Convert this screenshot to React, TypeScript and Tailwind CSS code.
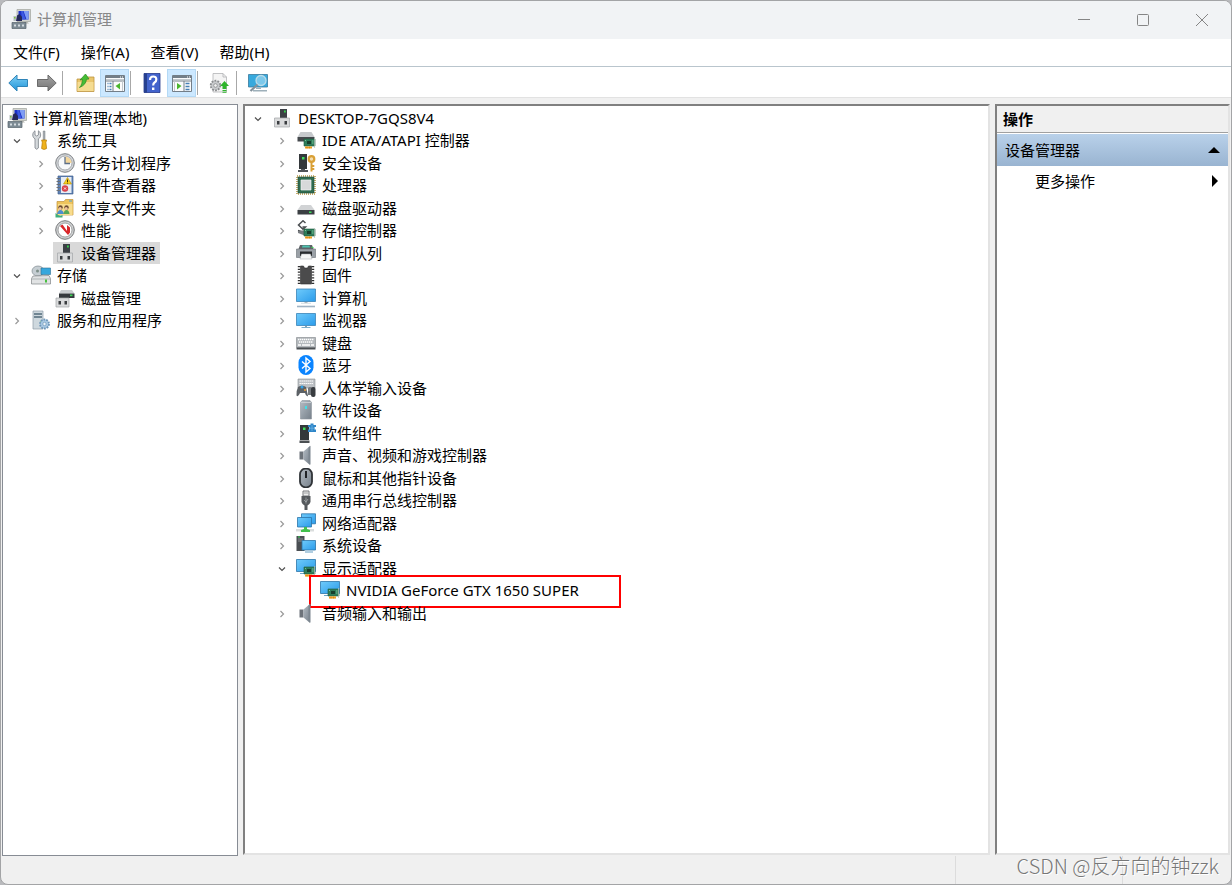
import type { ReactNode } from "react";

type IconName = keyof typeof glyphs;
type Item = { label: string; icon: IconName; level: 0 | 1 | 2; open?: boolean; leaf?: boolean; selected?: boolean; framed?: boolean };

const board = (
  <>
    <path d="M8 9h11v7H8z" fill="#2e7d5b" stroke="#1d5a3e" strokeWidth=".6" />
    <path d="M18.6 8v10" stroke="#b7c4bc" strokeWidth=".8" />
    <path d="M11 11h4v3h-4z" fill="#173f2c" />
    <path d="M9 10.5h1M16 11h1.500M16 13h1.500" stroke="#8fd0a8" strokeWidth=".8" />
    <path d="M9 16.400h7v2.200H9z" fill="#f0a020" />
    <path d="M11 16.500v2M13.500 16.500v2" stroke="#b87010" strokeWidth=".5" />
  </>
);

const speaker = (
  <>
    <path d="M3.500 6.500h4v8h-4z" fill="#6d737a" />
    <path d="M7.500 6.500 14 1v19l-6.500-5.500z" fill="url(#steel)" />
    <path d="M12.500 2.500 14.500.8v19l-2-1.800z" fill="#7c868f" />
  </>
);

const towerBase = (
  <>
    <path d="M8 1h7v10H8z" fill="#3c4045" />
    <path d="M12 2.500h1.800v2H12z" fill="#35d04c" />
    <path d="M2.500 10h15v9h-15z" fill="#d9dadb" stroke="#a2a5a8" strokeWidth=".7" />
    <path d="M5 13h2.500v3.500H5zM12.500 13H15v3.500h-2.500z" fill="#3a3d40" />
  </>
);

const glyphs = {
  management: (
    <>
      <path d="M6 .5h13.500v12H6z" fill="#d3d5d0" stroke="#a0a39e" strokeWidth=".7" />
      <path d="M7.500 2h10v8.500h-10z" fill="#1a2fc8" />
      <path d="M12.500 2h5v8.500h-2z" fill="#7f9df4" />
      <path d="M10 2h2l2.500 8.500H11z" fill="#3d5ae0" />
      <path d="M6 6.500 8.500 5l2.500 3v4H5z" fill="#25285a" />
      <path d="M2.500 7H5v5H2.500z" fill="#b8bec2" />
      <path d="M3 8h1.500v1.500H3z" fill="#7cc23c" />
      <path d="M13 12.500h3l2 2h-5z" fill="#b5b7b2" />
      <path d="M1 13.500h14v6H1z" fill="#7d8b94" stroke="#56626a" strokeWidth=".7" />
      <path d="M3 15.500h2v2H3zM7 15.500h2v2H7zM11 15.500h2v2h-2z" fill="#d5dce0" />
    </>
  ),
  tools: (
    <>
      <path d="M4 .8C1 2.500 1 7.500 4 8.800V18q1.700 2.500 3.400 0V8.800c3-1.300 3-6.300 0-8V5L5.700 6 4 5z" fill="#d5d9dc" stroke="#7b8288" strokeWidth=".8" />
      <path d="M12.200 1h1.800v9h-1.800z" fill="#a7adb2" stroke="#777d82" strokeWidth=".5" />
      <path d="M10.600 10h5l-.7 2.500.7 6q-2.500 2-5 0l.7-6z" fill="#f0b31c" stroke="#b57b08" strokeWidth=".7" />
    </>
  ),
  clock: (
    <>
      <circle cx="10" cy="10" r="9.300" fill="#d2d5d8" stroke="#7d8084" />
      <circle cx="10" cy="10" r="7" fill="#f7f9fb" stroke="#989ca1" strokeWidth=".8" />
      <path d="M10 10V3.500A6.500 6.500 0 0 1 16.500 10z" fill="#f3d69b" />
      <path d="M10 4v6.500h5" fill="none" stroke="#5c6f88" strokeWidth="1.300" />
    </>
  ),
  events: (
    <>
      <path d="M3 1h15v18H3z" fill="#5f82b5" stroke="#42618f" strokeWidth=".7" />
      <path d="M6 2h10.500v16H6z" fill="#e6ecf4" />
      <path d="M1.500 3.500H5M1.500 6.500H5M1.500 9.500H5M1.500 12.500H5M1.500 15.500H5" stroke="#6d7075" strokeWidth="1.200" />
      <path d="m12.500 2.500 4 6.500h-8z" fill="#f7cf1d" stroke="#b98c05" strokeWidth=".6" />
      <path d="M12.500 4.500V7m0 .7v.8" stroke="#403000" />
      <circle cx="10" cy="13.500" r="3.200" fill="#d8404a" />
      <path d="m9 12.500 2 2m0-2-2 2" stroke="#fff" strokeWidth=".9" />
    </>
  ),
  shared: (
    <>
      <path d="M2 3.500h7l1.500-2H18V17H2z" fill="#eec45c" stroke="#c2923a" strokeWidth=".7" />
      <path d="M3 6h14.500v11H3z" fill="#f8dc8c" />
      <path d="M14 3h3" stroke="#4c9ed8" strokeWidth="1.200" />
      <circle cx="5.500" cy="9.500" r="2.200" fill="#6b4a32" />
      <circle cx="11.500" cy="9.500" r="2.200" fill="#6b4a32" />
      <circle cx="5.200" cy="10.400" r="1.500" fill="#f0c49c" />
      <circle cx="11.200" cy="10.400" r="1.500" fill="#f0c49c" />
      <path d="M2 16q1-4 3.500-4T9 16z" fill="#4d8ed0" />
      <path d="M8.500 16q.5-4 3-4t3 4z" fill="#58a85a" />
      <path d="M.5 15q4 4 7 2v2.500h-7z" fill="#3fae7c" />
    </>
  ),
  performance: (
    <>
      <circle cx="10" cy="10" r="9.300" fill="#cfd1d2" stroke="#77797b" />
      <circle cx="10" cy="10" r="7" fill="#fff" stroke="#8d8f91" strokeWidth=".8" />
      <path d="m5 6 2.500-1.500L12 11V5l3 2.500v5L13 15z" fill="#d9262a" />
    </>
  ),
  device: towerBase,
  storage: (
    <>
      <ellipse cx="7" cy="6" rx="6" ry="5" fill="#c6ced3" stroke="#838c92" strokeWidth=".7" />
      <circle cx="6.500" cy="6" r="1.500" fill="#7d8e88" />
      <path d="M10 3h9.500v6.500H10z" fill="#37a7dd" stroke="#2f6e90" strokeWidth=".6" />
      <path d="m2 11 16-.5 1.500 3v5.500h-19v-5.500z" fill="#e1e3e4" stroke="#7f8487" strokeWidth=".7" />
      <path d="M1 14h18" stroke="#9ba0a3" strokeWidth=".7" />
      <path d="M14 14.500h2v3h-2z" fill="#47bf3f" />
    </>
  ),
  diskManagement: (
    <>
      <path d="M6 2h11l2.500 3.500H4z" fill="#c9cccf" />
      <path d="M4 5.500h15.500V10H4z" fill="#35393d" />
      <path d="M15 6.500h2.500v1.700H15z" fill="#3ad654" />
      <path d="M1 10h13v9H1z" fill="#d9dadb" stroke="#a2a5a8" strokeWidth=".7" />
      <path d="M3.500 13H6v3.500H3.500zM9.500 13H12v3.500H9.500z" fill="#3a3d40" />
    </>
  ),
  services: (
    <>
      <path d="M2 1h10v18H2z" fill="#ced8de" stroke="#8e9ca6" strokeWidth=".7" />
      <path d="M3 4h8M3 7h8" stroke="#51697a" strokeWidth="1.300" />
      <path d="M9 12h2" stroke="#52b85c" />
      <circle cx="13.500" cy="14" r="4.500" fill="#a9c9e4" stroke="#6f96b8" strokeWidth="1.800" strokeDasharray="1.800 1" />
      <circle cx="13.500" cy="14" r="1.700" fill="#eef4f8" stroke="#6f96b8" strokeWidth=".7" />
    </>
  ),
  ide: (
    <>
      <path d="M4.500 2h11l3 5H1.500z" fill="#c6c9cc" />
      <path d="M1.500 7h17v4.500h-17z" fill="#45494d" />
      {board}
    </>
  ),
  security: (
    <>
      <path d="M3 1h8v15H3z" fill="#34383b" />
      <path d="M2 17h10v2H2zM5 16h4v1H5z" fill="#505458" />
      <path d="M6 4h2.500v2.500H6z" fill="#3de05a" />
      <circle cx="15.500" cy="6" r="2.800" fill="#f3dcae" stroke="#d9a036" strokeWidth="2.200" />
      <path d="M15.500 9v9.500M16.500 13h1.800M16.500 16h1.800" stroke="#d9a036" strokeWidth="2" />
    </>
  ),
  processor: (
    <>
      <path d="M1 1h18v18H1z" fill="none" stroke="#b49745" strokeWidth="1.600" strokeDasharray="1 1" />
      <path d="M2 2h16v16H2z" fill="#2f6b50" stroke="#1f4e39" strokeWidth=".6" />
      <path d="M5 5h10v10H5z" fill="#d8d9da" stroke="#f3f4f4" strokeWidth=".7" />
    </>
  ),
  disk: (
    <>
      <path d="M5 7h10l3.500 5h-17z" fill="#d1d3d5" />
      <path d="M1.500 12h17v4.500h-17z" fill="#3b3f43" />
      <path d="M13 13.500h2.500v1.500H13z" fill="#3ddd5b" />
    </>
  ),
  storageController: (
    <>
      <path d="M9.500 3 7 .8 2.500 5 7 9.300 9.500 7H6.500M2 10.500l6 2" fill="none" stroke="#4b4e51" strokeWidth="1.500" />
      <path d="m2 11 8-1v6l-8-3z" fill="#777b7f" />
      {board}
    </>
  ),
  printer: (
    <>
      <path d="M4 2h12l1.500 4h-15z" fill="#5d6266" />
      <path d="M6.500 2.500h7l.5 2H6z" fill="#4cc3b0" />
      <path d="M.5 6h19v8.500H.5z" fill="#9aa0a6" stroke="#6a7076" strokeWidth=".6" />
      <path d="M4 8.500h12V13H4z" fill="#26292c" />
      <path d="M5.500 11h9l1.500 5H4z" fill="#f4f5f5" stroke="#a5a9ac" strokeWidth=".5" />
      <path d="M15.500 4.500h2" stroke="#38d650" strokeWidth="1.200" />
    </>
  ),
  firmware: (
    <>
      <path d="M4.500 1h3l1 2h3l1-2h3v18h-11z" fill="#4b4b4c" stroke="#2d2d2e" strokeWidth=".6" />
      <path d="M3 1v18M17 1v18" stroke="#303031" strokeWidth="2.400" strokeDasharray="1.200 1.600" />
    </>
  ),
  computer: (
    <>
      <path d="M.5 1h19v12.500H.5z" fill="url(#screen)" stroke="#3a84b8" strokeWidth=".8" />
      <path d="M8.500 14h3v1h-3z" fill="#a9b4bc" />
      <path d="M5 15.300h10" stroke="#ccd5db" strokeWidth=".8" />
      <path d="M1 18.500h18" stroke="#9fb3c4" strokeWidth="1.600" />
    </>
  ),
  monitor: (
    <>
      <path d="M.5 3.500h19v12H.5z" fill="url(#screen)" stroke="#3a84b8" strokeWidth=".8" />
      <path d="M9 16h2v1H9z" fill="#8aa0ae" />
      <path d="M5.500 17.500h9" stroke="#7daecb" />
    </>
  ),
  keyboard: (
    <>
      <path d="M.5 4.500h19v10H.5z" fill="#b4b9bd" stroke="#8c9195" strokeWidth=".7" />
      <path d="M.5 14.500h19v2H.5z" fill="#4a4f53" />
      <path d="M2 6.500h16M3 9h14" stroke="#fff" strokeWidth="1.400" strokeDasharray="1.400 .6" />
      <path d="M2 12h3m1 0h8m1 0h3" stroke="#fff" strokeWidth="1.400" />
    </>
  ),
  bluetooth: (
    <>
      <rect x="2.500" y="0" width="15" height="20" rx="7.500" fill="#0a84ff" />
      <path d="m6 6.500 8 7-4 3.500V3l4 3.500-8 7" fill="none" stroke="#fff" strokeWidth="1.400" />
    </>
  ),
  hid: (
    <>
      <path d="M2 1h17v9H2z" fill="#bdc1c5" stroke="#8c9195" strokeWidth=".6" />
      <path d="M3.500 3h14M3.500 5.500h14" stroke="#fff" strokeWidth="1.200" strokeDasharray="1.400 .6" />
      <path d="M2 9q4-2.500 8 0l2 9q-2 1-3-3H4q-2 5-3.500 2.500Q0 13 2 9z" fill="#5c6166" />
      <circle cx="6" cy="9" r="1.500" fill="#35a3e4" />
      <path d="M12 10q2-2 4 0v7h-4z" fill="#74797d" />
      <rect x="15" y="9" width="4.500" height="10" rx="2" fill="#383c40" />
      <circle cx="9" cy="12" r="1" fill="#e99b35" />
    </>
  ),
  softwareDevice: (
    <>
      <path d="M4.500 2.500 6 .5h8l1.500 2V19h-11z" fill="url(#steel)" stroke="#8e969d" strokeWidth=".6" />
      <path d="M5 2.500h10" stroke="#c6ccd1" />
      <path d="M9 6h2v3H9z" fill="#3fe0e8" />
    </>
  ),
  component: (
    <>
      <path d="M4 2h9v15H4z" fill="#33373a" />
      <path d="M3.500 17.500h10V20h-10z" fill="#4b4f52" />
      <path d="M7 4.500h2.500V7H7z" fill="#3de05a" />
      <path d="M12 2h2.500V.5h3V2H20v2h-1.500v2.500H20v2.500h-8V6.500h1.500V4H12z" fill="#2f86c8" />
      <path d="M16 2v6M13 5.200h6" stroke="#69b1e2" strokeWidth=".8" />
    </>
  ),
  speaker,
  mouse: (
    <>
      <rect x="4" y=".700" width="12" height="18.600" rx="5.500" fill="url(#steel)" stroke="#2f3337" strokeWidth="1.800" />
      <path d="M10 3v7" stroke="#202327" strokeWidth="2" />
    </>
  ),
  usb: (
    <>
      <path d="M7 1h6v5H7z" fill="#eceded" stroke="#77797c" />
      <path d="M8.500 3h1m1 0h1" stroke="#55585b" />
      <path d="M5.500 6h9v6q-1 3-3 3.500V20h-3v-4.500q-2-.5-3-3.500z" fill="#55595d" />
      <path d="M10 7.500v6M8 10l2 2 2-3" stroke="#aeb2b5" strokeWidth=".7" fill="none" />
    </>
  ),
  network: (
    <>
      <path d="M5.500.8h14v10h-14z" fill="url(#screen)" stroke="#2c75a8" strokeWidth=".8" />
      <path d="M1.500 4.500h14v9.500h-14z" fill="url(#screen)" stroke="#2c75a8" strokeWidth=".8" />
      <path d="M0 16h18v2.500H0z" fill="#dadddd" />
      <path d="M8 14h3v2l3 1v2H5v-2l3-1z" fill="#42c14d" />
    </>
  ),
  system: (
    <>
      <path d="M.5 1h8v15h-8z" fill="#4a4f53" />
      <path d="M2 4h5M2 6h5" stroke="#8e9498" strokeWidth=".9" />
      <path d="M2 2h2" stroke="#3ddd5b" />
      <path d="M6 5.500h13.500V15H6z" fill="url(#screen)" stroke="#2c75a8" strokeWidth=".8" />
      <path d="M9 17h8" stroke="#7daecb" strokeWidth="1.200" />
    </>
  ),
  display: (
    <>
      <path d="M.5 1.500h19v12H.5z" fill="url(#screen)" stroke="#2c75a8" strokeWidth=".8" />
      <path d="M4 15.500h5" stroke="#6fa6c8" />
      {board}
    </>
  ),
  back: <path d="M.8 10 9 2v4.500h10.500v7H9V18z" fill="url(#blueArrow)" stroke="#2f84b8" />,
  forward: <path d="M19.200 10 11 2v4.500H.5v7H11V18z" fill="url(#greyArrow)" stroke="#6b6b6b" />,
  folderUp: (
    <>
      <path d="M1 6h7l1.500-2H18v14.500H1z" fill="#eac66c" stroke="#be9440" strokeWidth=".8" />
      <path d="M1.500 9h16v9h-16z" fill="#f5dc92" />
      <path d="M3.500 14.500C6 12 6 9 6.500 6.500L4 7l5.500-6L13 6l-2.500.3Q10 12 3.500 14.500z" fill="#45bd35" stroke="#2c8a24" strokeWidth=".7" />
    </>
  ),
  treePane: (
    <>
      <path d="M.5 2.500h19v16H.5z" fill="#fafbfc" stroke="#737e88" />
      <path d="M1 3h18v2H1z" fill="#737e88" />
      <path d="M1 6.500h18" stroke="#c2c8cd" />
      <path d="M15 4h1m1 0h1" stroke="#fff" />
      <path d="M.5 8h19M8 8v10.500" stroke="#737e88" />
      <path d="M2.500 10.500h1m1 0h2m-4 3h1m1 0h2m-4 3h1m1 0h2" stroke="#467fb5" strokeWidth="1.300" />
      <path d="M15 10v6.500L10.500 13z" fill="#4ab62e" />
      <path d="M17.500 8v10" stroke="#c2c8cd" />
    </>
  ),
  actionPane: (
    <>
      <path d="M.5 2.500h19v16H.5z" fill="#fafbfc" stroke="#737e88" />
      <path d="M1 3h18v2H1z" fill="#737e88" />
      <path d="M1 6.500h18" stroke="#c2c8cd" />
      <path d="M15 4h1m1 0h1" stroke="#fff" />
      <path d="M.5 8h19M12 8v10.500" stroke="#737e88" />
      <path d="M13.500 10.500h4m-4 3h4m-4 3h4" stroke="#467fb5" strokeWidth="1.300" />
      <path d="M5 10v6.500L9.500 13z" fill="#4ab62e" />
      <path d="M2.500 8v10" stroke="#c2c8cd" />
    </>
  ),
  help: (
    <>
      <path d="M2 .500h16v19H2z" fill="#4263cc" stroke="#24398a" strokeWidth=".8" />
      <path d="M2 .500h3v19H2z" fill="#27408f" />
      <path d="M8 7q0-3.500 3.200-3.500T14.300 6.500q0 2-1.800 3-1.300.8-1.300 3" fill="none" stroke="#fff" strokeWidth="2.200" />
      <path d="M10 14.500h2.400v2.400H10z" fill="#fff" />
    </>
  ),
  update: (
    <>
      <path d="M4 .5h10l3.500 3.500v15H4z" fill="#f4f4f4" stroke="#b2b4b6" strokeWidth=".8" />
      <path d="M14 .5V4h3.500" fill="none" stroke="#b2b4b6" strokeWidth=".8" />
      <circle cx="6.500" cy="12.500" r="4.800" fill="#c9cbcd" stroke="#8b8d8f" strokeWidth="1.800" strokeDasharray="1.800 1.200" />
      <circle cx="6.500" cy="12.500" r="1.800" fill="#f3f3f3" stroke="#808284" strokeWidth=".7" />
      <path d="m15.500 8 4.500 5h-2.500v3h-4v-3H11zM13.500 17h4v1h-4zM13.500 18.800h4v1h-4z" fill="#2fb52c" />
    </>
  ),
  scan: (
    <>
      <path d="M.5 1.500h19v12.500H.5z" fill="#37a9dd" stroke="#3a7a9c" strokeWidth=".8" />
      <path d="M8 14.500h5V16H8zM5 17h14v1.500H5z" fill="#9eb0ba" />
      <circle cx="13" cy="7.500" r="5" fill="#8fd0ee" fillOpacity=".8" stroke="#b9dcea" strokeWidth="1.300" />
      <path d="m9.500 11.500-7 6.500" stroke="#82919b" strokeWidth="2.200" />
    </>
  ),
};

function Icon({ name }: { name: IconName }) {
  return (
    <svg viewBox="0 0 20 20" className="size-5 shrink-0" aria-hidden="true">
      {glyphs[name]}
    </svg>
  );
}

function Gradients() {
  return (
    <svg className="absolute size-0" aria-hidden="true">
      <defs>
        <linearGradient id="screen" x1="0" y1="0" x2="1" y2="1">
          <stop offset="0" stopColor="#6fcbfb" />
          <stop offset="1" stopColor="#2b9bea" />
        </linearGradient>
        <linearGradient id="steel" x1="0" y1="0" x2="1" y2="1">
          <stop offset="0" stopColor="#b4bcc4" />
          <stop offset="1" stopColor="#76808a" />
        </linearGradient>
        <linearGradient id="blueArrow" x1="0" y1="0" x2="0" y2="1">
          <stop offset="0" stopColor="#7fd0f5" />
          <stop offset="1" stopColor="#1e93d8" />
        </linearGradient>
        <linearGradient id="greyArrow" x1="0" y1="0" x2="0" y2="1">
          <stop offset="0" stopColor="#a3a3a3" />
          <stop offset="1" stopColor="#757575" />
        </linearGradient>
      </defs>
    </svg>
  );
}

const consoleItems: Item[] = [
  { label: "计算机管理(本地)", icon: "management", level: 0, leaf: true },
  { label: "系统工具", icon: "tools", level: 1, open: true },
  { label: "任务计划程序", icon: "clock", level: 2 },
  { label: "事件查看器", icon: "events", level: 2 },
  { label: "共享文件夹", icon: "shared", level: 2 },
  { label: "性能", icon: "performance", level: 2 },
  { label: "设备管理器", icon: "device", level: 2, leaf: true, selected: true },
  { label: "存储", icon: "storage", level: 1, open: true },
  { label: "磁盘管理", icon: "diskManagement", level: 2, leaf: true },
  { label: "服务和应用程序", icon: "services", level: 1 },
];

const deviceItems: Item[] = [
  { label: "DESKTOP-7GQS8V4", icon: "device", level: 0, open: true },
  { label: "IDE ATA/ATAPI 控制器", icon: "ide", level: 1 },
  { label: "安全设备", icon: "security", level: 1 },
  { label: "处理器", icon: "processor", level: 1 },
  { label: "磁盘驱动器", icon: "disk", level: 1 },
  { label: "存储控制器", icon: "storageController", level: 1 },
  { label: "打印队列", icon: "printer", level: 1 },
  { label: "固件", icon: "firmware", level: 1 },
  { label: "计算机", icon: "computer", level: 1 },
  { label: "监视器", icon: "monitor", level: 1 },
  { label: "键盘", icon: "keyboard", level: 1 },
  { label: "蓝牙", icon: "bluetooth", level: 1 },
  { label: "人体学输入设备", icon: "hid", level: 1 },
  { label: "软件设备", icon: "softwareDevice", level: 1 },
  { label: "软件组件", icon: "component", level: 1 },
  { label: "声音、视频和游戏控制器", icon: "speaker", level: 1 },
  { label: "鼠标和其他指针设备", icon: "mouse", level: 1 },
  { label: "通用串行总线控制器", icon: "usb", level: 1 },
  { label: "网络适配器", icon: "network", level: 1 },
  { label: "系统设备", icon: "system", level: 1 },
  { label: "显示适配器", icon: "display", level: 1, open: true },
  { label: "NVIDIA GeForce GTX 1650 SUPER", icon: "display", level: 2, leaf: true, framed: true },
  { label: "音频输入和输出", icon: "speaker", level: 1 },
];

const consoleIndents = ["pl-0.5", "pl-[7px]", "pl-[31px]"];
const deviceIndents = ["pl-1.5", "pl-[30px]", "pl-[54px]"];

function Chevron({ open }: { open?: boolean }) {
  return (
    <svg viewBox="0 0 14 14" className="size-3.5" aria-hidden="true" fill="none">
      {open ? (
        <path d="m4 6.500 3 3 3-3" stroke="#505050" strokeWidth="1.200" />
      ) : (
        <path d="m5.500 5 3 3-3 3" stroke="#999" strokeWidth="1.200" />
      )}
    </svg>
  );
}

function Tree({ items, label, indents }: { items: Item[]; label: string; indents: string[] }) {
  return (
    <ul aria-label={label}>
      {items.map((item) => (
        <li key={item.label} className={`flex items-center odd:h-[23px] even:h-[22px] ${indents[item.level]}`}>
          {!(item.leaf && item.level === 0) && (
            <span className="flex w-[19px] shrink-0">
              {!item.leaf && (
                <button type="button" aria-label={`${item.open ? "折叠" : "展开"} ${item.label}`}>
                  <Chevron open={item.open} />
                </button>
              )}
            </span>
          )}
          <button
            type="button"
            className={`relative flex h-[22px] items-center gap-1.5 whitespace-nowrap pl-0.5 pr-1 ${item.selected ? "bg-[#d9d9d9]" : ""}`}
          >
            <Icon name={item.icon} />
            {item.label}
            {item.framed && <span className="absolute -left-[9px] -top-1 h-[33px] w-[312px] border-2 border-[#f00]" />}
          </button>
        </li>
      ))}
    </ul>
  );
}

function Tool({ name, label, active }: { name: IconName; label: string; active?: boolean }) {
  return (
    <button
      type="button"
      aria-label={label}
      className={`flex h-7 w-[29px] items-center justify-center ${active ? "border border-[#b4d9f5] bg-[#cce8ff]" : ""}`}
    >
      <Icon name={name} />
    </button>
  );
}

function Divider() {
  return <span className="mb-0.5 ml-px mr-1.5 h-6 w-px bg-[#a8a8a8]" />;
}

function CaptionButton({ label, children }: { label: string; children: ReactNode }) {
  return (
    <button type="button" aria-label={label} className="flex w-[59px] items-center justify-center">
      <svg viewBox="0 0 14 14" className="size-3.5" fill="none" stroke="#858585" aria-hidden="true">
        {children}
      </svg>
    </button>
  );
}

export default function App() {
  return (
    <div className="flex min-h-screen flex-col bg-[#b9babd] font-['Noto_Sans','Noto_Sans_CJK_SC',sans-serif] text-[15px] leading-[22px] text-black">
      <Gradients />
      <div className="relative flex grow flex-col overflow-hidden rounded-lg border border-[#a3a4a6] bg-[#f0f0f0]">
        <header className="flex h-[38px] shrink-0 justify-between bg-[#f1f3f5]">
          <div className="flex items-center gap-1.5 pb-0.5 pl-2.5 text-[#888]">
            <Icon name="management" />
            <h1>计算机管理</h1>
          </div>
          <div className="flex">
            <CaptionButton label="最小化">
              <path d="M1 6.500h12" />
            </CaptionButton>
            <CaptionButton label="最大化">
              <rect x="1.500" y="1.500" width="11" height="11" rx="1" />
            </CaptionButton>
            <CaptionButton label="关闭">
              <path d="m1 1 12 12M13 1 1 13" />
            </CaptionButton>
          </div>
        </header>

        <nav className="flex h-7 shrink-0 items-center gap-[21px] border-b border-[#b9c5cd] bg-white px-3 pb-px">
          <button type="button">文件(F)</button>
          <button type="button">操作(A)</button>
          <button type="button">查看(V)</button>
          <button type="button">帮助(H)</button>
        </nav>

        <div role="toolbar" aria-label="工具栏" className="flex h-[31px] shrink-0 items-end border-b border-[#e2e2e2] bg-white pl-0.5">
          <Tool name="back" label="后退" />
          <Tool name="forward" label="前进" />
          <Divider />
          <span className="pl-0.5">
            <Tool name="folderUp" label="上移一级" />
          </span>
          <Tool name="treePane" label="显示/隐藏控制台树" active />
          <Divider />
          <span className="pr-px">
            <Tool name="help" label="帮助" />
          </span>
          <Tool name="actionPane" label="显示/隐藏操作窗格" active />
          <Divider />
          <span className="pr-0.5">
            <Tool name="update" label="更新驱动程序" />
          </span>
          <Divider />
          <Tool name="scan" label="扫描检测硬件改动" />
        </div>

        <main className="grid grow grid-cols-[237px_minmax(0,1fr)_235px] gap-x-[5px] pr-px pt-1.5">
          <section className="ml-px border border-[#878c94] bg-white pt-px">
            <Tree items={consoleItems} label="控制台树" indents={consoleIndents} />
          </section>
          <section className="mb-px border-2 border-b-[#e3e3e3] border-l-[#808080] border-r-[#e3e3e3] border-t-[#808080] bg-white">
            <Tree items={deviceItems} label="设备" indents={deviceIndents} />
          </section>
          <aside className="mb-px border-2 border-b-[#e3e3e3] border-l-[#808080] border-r-[#e3e3e3] border-t-[#808080] bg-white">
            <h2 className="flex h-[27px] items-center border-b border-[#a0a0a0] bg-[#f0f0f0] pl-1.5 font-bold">操作</h2>
            <button
              type="button"
              className="mt-px flex h-8 w-full items-center justify-between bg-linear-to-b from-[#b9d1ea] to-[#99b4d1] px-2"
            >
              设备管理器
              <svg viewBox="0 0 12 6" className="h-1.5 w-3" aria-hidden="true">
                <path d="M6 0l6 6H0z" />
              </svg>
            </button>
            <button type="button" className="flex h-[30px] w-full items-center justify-between pl-[38px] pr-2.5">
              更多操作
              <svg viewBox="0 0 6 12" className="h-3 w-1.5" aria-hidden="true">
                <path d="M0 0l6 6-6 6z" />
              </svg>
            </button>
          </aside>
        </main>

        <footer className="flex h-7 shrink-0 justify-end">
          <span className="w-[167px] border-l border-[#dcdcdc]" />
          <span className="w-[109px] border-l border-[#dcdcdc]" />
        </footer>

        <p className="absolute bottom-1 right-3 font-['Noto_Sans_CJK_SC',sans-serif] text-[20px] font-light leading-[28px] text-[#777] [text-shadow:1px_1px_0_#fff]">
          CSDN @反方向的钟zzk
        </p>
      </div>
    </div>
  );
}
